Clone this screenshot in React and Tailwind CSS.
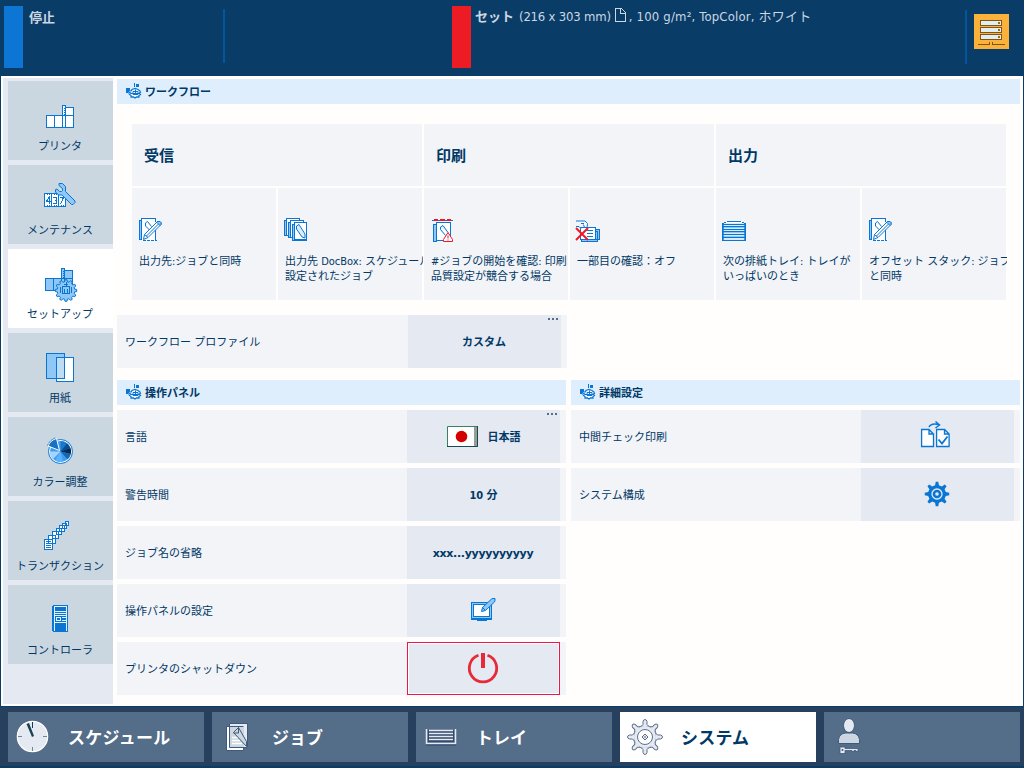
import React from "react";

const BLUE = "#0a76d3";
const LIGHT = "#8fc7f6";

function Svg({ w, h, children, className = "", crisp = false }) {
  return (
    <svg
      width={w}
      height={h}
      viewBox={`0 0 ${w} ${h}`}
      fill="none"
      shapeRendering={crisp ? "crispEdges" : "auto"}
      className={`shrink-0 overflow-visible ${className}`}
    >
      {children}
    </svg>
  );
}

function gearPath(cx, cy, outer, inner, teeth, base = 0.62, tip = 0.36) {
  const pts = [];
  for (let i = 0; i < teeth; i++) {
    const a = (i / teeth) * Math.PI * 2 - Math.PI / 2;
    const s = Math.PI / teeth;
    [[-base, inner], [-tip, outer], [tip, outer], [base, inner]].forEach(([k, r]) => {
      pts.push(`${(cx + Math.cos(a + s * k) * r).toFixed(2)} ${(cy + Math.sin(a + s * k) * r).toFixed(2)}`);
    });
  }
  return `M${pts.join("L")}Z`;
}

function PressShape({ fill }) {
  return (
    <g stroke={BLUE} fill={fill}>
      <path d="M.5 10.500h8v12h-8zM8.500 10.500h8v12h-8zM16.500 10.500h11v12h-11zM19.500 2.500h8v8h-8zM16.500 .5h3v22h-3z" />
      <path d="M18 3v1M18 5v1M18 7v1M18 9v1" />
    </g>
  );
}

const PrinterIcon = () => (
  <Svg w={37} h={30} crisp><g transform="translate(4 4)"><PressShape fill="#fff" /></g></Svg>
);

const WrenchIcon = () => (
  <Svg w={37} h={30}>
    <g stroke={BLUE} shapeRendering="crispEdges">
      <path d="M2.500 8.500h21v13h-21zM9.500 8.500v13M16.500 8.500v13" fill="#fff" />
      <path d="M5 9.500h3M12 9.500h3M5 20.500h3M12 20.500h3M19 20.500h3" strokeDasharray="1 1" />
      <path d="M7.500 19V11.500L4.500 16.500H9" />
      <path d="M11 12.500h3.500v2.500h-2h2v3.500H11" />
      <path d="M17.500 12.500h4L18.500 19" />
    </g>
    <path
      d="M17 -1.500h3.500l3 3v5l9.500 9.500v1.500l-2 2h-1.500l-9.500-9.500h-3.500l-3-3V4.500l1.500-.5 2.500 2.500h2l1-1V3.500L17 .5z"
      fill={LIGHT}
      stroke={BLUE}
    />
  </Svg>
);

const SetupIcon = () => (
  <Svg w={37} h={30}>
    <g transform="translate(3 -1)" shapeRendering="crispEdges"><PressShape fill={LIGHT} /></g>
    <path d={gearPath(24, 21.5, 10.8, 8.8, 12)} fill={LIGHT} stroke={BLUE} />
    <g stroke={BLUE} shapeRendering="crispEdges">
      <path d="M20.500 17.500h7v7h-7zM22 15.500h4M24.500 13v4M22.500 20v4M25.500 20v4M18.500 18v6M29.500 18v6" />
    </g>
  </Svg>
);

const PaperIcon = () => (
  <Svg w={37} h={30} crisp>
    <path d="M4.500 .5h18v25h-18z" fill={LIGHT} stroke={BLUE} />
    <path d="M14.500 4.500h17v24h-17z" fill="#fff" stroke={BLUE} />
    <path d="M15 5h7v20h-7z" fill="#bfdcf5" />
    <path d="M22.500 4v21.500h-8" stroke={BLUE} />
  </Svg>
);

const ColorIcon = () => (
  <Svg w={37} h={30}>
    <circle cx="18.500" cy="14.500" r="12" fill="#fff" stroke={BLUE} />
    <circle cx="18.500" cy="14.500" r="10.500" fill="#3f9df0" />
    <path d="M18.500 14.500V4A10.500 10.500 0 0 1 25 6.300z" fill="#1778cc" />
    <path d="M18.500 14.500L25 6.300A10.500 10.500 0 0 1 28.500 11z" fill="#0a4e92" />
    <path d="M18.500 14.500L28.500 11A10.500 10.500 0 0 1 28.800 17z" fill="#04284f" />
    <path d="M18.500 14.500L28.800 17A10.500 10.500 0 0 1 25.500 22.300z" fill="#1666b1" />
    <path d="M18.500 14.500L21 24.700A10.500 10.500 0 0 1 13 23.500z" fill="#5bb0ff" />
    <path d="M18.500 14.500L11 22A10.500 10.500 0 0 1 8 14.500z" fill="#a7d4ff" />
    <path d="M17.500 13.500L6 9A13 13 0 0 1 14.500 1.500z" fill="#1472c7" stroke="#fff" />
    <path d="M5.500 8.500A13 13 0 0 1 14 .8" stroke={BLUE} strokeDasharray="2 1" />
  </Svg>
);

const TransactionIcon = () => (
  <Svg w={37} h={30} crisp>
    <g stroke={BLUE} fill="#fff">
      <path d="M23.500 .5h3v4h-3zM20.500 2.500h4v5h-4zM17.500 4.500h5v6h-5zM14.500 7.500h5v6h-5zM10.500 10.500h6v7h-6zM6.500 14.500h7v8h-7zM2.500 18.500h8v10h-8z" />
      <path d="M4 20.500h5M4 22.500h5M4 24.500h5M4 26.500h5" />
    </g>
  </Svg>
);

const ControllerIcon = () => (
  <Svg w={37} h={30} crisp>
    <path d="M10 1l2-1h14v27H12l-2-1z" fill={BLUE} />
    <path d="M12.500 1v25M24.500 2v24M12.500 1.500h12M13 6.500h11M13 8.500h11M13 10.500h11M14.500 12.500h4v3h-4v-3zM20 12.500h4M20 15.500h4M13 17.500h11" stroke="#e5f1fc" />
  </Svg>
);

const SectionIcon = () => (
  <Svg w={16} h={16} className="-mt-px">
    <path d="M0 5h4v6H2v-1H0z" fill={BLUE} />
    <path d="M8 0h1v4H8zM10 1h3v3h-3z" fill={BLUE} />
    <path d="M2.500 9.500l2.500 -3 4-1.500 3 1.500 3 3.500-1 4-2 1h-6l-3-1z" fill="#fff" />
    <path d="M4.500 8.500l1.500-2 3-1 3 1 2.500 2M3 9l1.500 1-1 1.500 1.500 1v1.500h2.500l1.500 1 1.500-1h2.500v-1.500l1.500-1-1-1.500 1.500-1" stroke={BLUE} strokeWidth="1.300" />
    <path d="M7 8.500h5v3H7zM9.500 6.500v5M5 10.500h9" stroke={BLUE} />
  </Svg>
);

const PencilPage = () => (
  <Svg w={24} h={24}>
    <g shapeRendering="crispEdges">
      <path d="M.5 2.500H3V21.500H.5z" fill={LIGHT} stroke={BLUE} />
      <path d="M2.500 .5h14v22h-14z" fill="#fff" />
      <path d="M2.500 21V.5h14V4M16.500 12v10" stroke={BLUE} />
      <path d="M4 22.500h14" stroke={BLUE} strokeDasharray="3 1" />
    </g>
    <path d="M6.500 5l2-1.500 4 5M6.500 5v3l4 4" stroke={BLUE} />
    <path d="M5.500 16.500L18.500 3.500h2.500l1 1v2L9 19.500l-4.500 2z" fill="#fff" stroke={BLUE} />
    <path d="M7.500 18L20 5.500M5.500 16.500l3.500 3" stroke={BLUE} />
    <path d="M18.500 3.500h2.500l1 1v2l-1 1-3-3z" fill={LIGHT} stroke={BLUE} />
  </Svg>
);

const DocBoxIcon = () => (
  <Svg w={24} h={24} className="-ml-px">
    <g transform="translate(0 -1)">
      <g stroke={BLUE} fill={LIGHT} shapeRendering="crispEdges">
        <path d="M.5 3.500h14v15H.5z" />
        <path d="M2.500 1.500h13v17h-13z" fill="#fff" />
        <path d="M4.500 5.500h14v15h-14z" />
        <path d="M6.500 3.500h13v17h-13z" fill="#fff" />
        <path d="M8.500 7.500h14v16h-14z" />
        <path d="M10.500 5.500h12v17h-12z" fill="#fff" />
      </g>
      <path d="M12.500 9l2.500-1.500 6 9.500v4l-3-1-5.500-8z" fill="#dceffe" stroke={BLUE} />
    </g>
  </Svg>
);

const ConfirmStartIcon = () => (
  <Svg w={24} h={25} className="ml-0.5">
    <g shapeRendering="crispEdges">
      <path d="M-1 2.500h21" stroke={BLUE} />
      <path d="M1 2h4M7 2h5M14 2h4" stroke="#f01828" strokeWidth="2" />
      <path d="M.5 6.500h3v17h-3z" fill={LIGHT} stroke={BLUE} />
      <path d="M3.500 4.500h14v18h-14z" fill="#fff" stroke={BLUE} />
    </g>
    <path d="M7.500 9l2.500-1.500 5 7M7.500 9v2.500l5 6" stroke={BLUE} fill="#dceffe" />
    <path d="M15 14.500l4.500 7v2h-9v-2z" fill="#fff" stroke="#f01828" />
    <path d="M15 17.500v3M15 21.500v1" stroke="#f01828" />
  </Svg>
);

const ProofOffIcon = () => (
  <Svg w={25} h={25} className="-ml-px">
    <g shapeRendering="crispEdges">
      <path d="M5.500 13.500h16v10h-16zM19.500 11.500h4v10h-4z" fill={LIGHT} stroke={BLUE} />
      <path d="M4.500 9.500h15v12h-15z" fill="#fff" stroke={BLUE} />
      <path d="M11 12.500h6M11 15.500h6M11 18.500h6" stroke={BLUE} />
    </g>
    <path d="M0 3h9l2.500 2.500-.5 4H8.500l-1-3M0 8.500h3l2 2M5 5.500h3" stroke={BLUE} fill="#fff" />
    <path d="M0 10l12 12M12 10L0 22" stroke="#f01828" strokeWidth="2" />
  </Svg>
);

const StackIcon = () => (
  <Svg w={24} h={24} crisp className="-ml-px">
    <g transform="translate(0 -1)">
      <path d="M.5 6.500L6.500 4.500h11l6 2v17H.5z" fill="#d6ebfc" stroke={BLUE} />
      <path d="M3 6h18l-4-1.500H7z" fill="#fff" />
      <path d="M1 9h22v2H1zM1 14h22v2H1zM1 19h22v2H1z" fill={LIGHT} />
      <path d="M0 7.500h24M0 9.500h24M0 12.500h24M0 14.500h24M0 17.500h24M0 20.500h24M0 23.500h24" stroke={BLUE} />
      <path d="M1.500 7v17M22.500 7v17" stroke={BLUE} opacity=".7" />
    </g>
  </Svg>
);

const FlagIcon = () => (
  <Svg w={31} h={21}>
    <path d="M.5 .5h30v20H.5z" fill="#fff" stroke="#35845f" />
    <path d="M27 1h3v19h-3z" fill="#969b9b" />
    <path d="M30.500 0v20.500H0" stroke="#174b4b" />
    <circle cx="14.500" cy="10.500" r="5.800" fill="#d40000" />
  </Svg>
);

const PanelIcon = () => (
  <Svg w={25} h={24} className="-mt-0.5">
    <g shapeRendering="crispEdges">
      <path d="M.5 4.500h20v17H.5z" fill={LIGHT} stroke={BLUE} />
      <path d="M2.500 6.500h16v12h-16z" fill="#fff" stroke={BLUE} />
      <path d="M0 20.500h21M6 22.500h10" stroke={BLUE} />
    </g>
    <path d="M10.500 13.500l1-4L20.500 1l1.500-.5h2v2l-.5 1.500-9 8.500z" fill={LIGHT} stroke={BLUE} />
    <path d="M11.500 9.500l3 3" stroke={BLUE} />
  </Svg>
);

const PowerIcon = () => (
  <Svg w={32} h={32} className="-mt-0.5">
    <path d="M11.500 3.300a13.700 13.700 0 1 0 9 0" stroke="#e62a37" strokeWidth="2.800" />
    <path d="M14 1h4v15h-4z" fill="#e62a37" />
  </Svg>
);

const CheckPagesIcon = () => (
  <Svg w={29} h={27} className="-mt-[5px]">
    <path d="M.6 8.500h7.400l4.500 4.500v12.500H.6zM8 8.500V13h4.500" fill="#fff" stroke={BLUE} strokeWidth="1.300" />
    <path d="M15.600 8.500h8l4.500 4.500v12.500h-12.500zM23.500 8.500V13h4.500" fill="#fff" stroke={BLUE} strokeWidth="1.300" />
    <path d="M8 6Q10 1.500 18 3.500M14.500 .5l4 3.500-4 3" stroke={BLUE} strokeWidth="1.500" />
    <path d="M17.500 18.500l3.500 4 5.500-7" stroke={BLUE} strokeWidth="1.800" />
  </Svg>
);

const BlueGear = () => (
  <Svg w={26} h={26} className="-mt-0.5">
    <path d={gearPath(13, 13, 12.3, 9, 8, 0.55, 0.26)} fill={BLUE} />
    <circle cx="13" cy="13" r="5" stroke="#e5e9f2" strokeWidth="1.300" />
    <circle cx="13" cy="13" r="1.800" fill="#e5e9f2" />
  </Svg>
);

const ClockIcon = () => (
  <Svg w={32} h={32}>
    <circle cx="15.500" cy="15.500" r="15.200" fill="#e5e9f1" stroke="#fff" strokeWidth="1.200" />
    <path d="M15.500 1v6M15.500 26v4M1 15.500h4M26 15.500h4" stroke="#71859c" />
    <path d="M15.500 1v6" stroke="#153c53" />
    <path d="M9.500 3l2.500-1 5 13-2 1z" fill="#164552" />
  </Svg>
);

const JobIcon = () => (
  <Svg w={22} h={28}>
    <path d="M.5 3.500h17v24H.5z" fill="#fff" stroke="#3e5979" />
    <path d="M3.500 .5h18v24h-18z" fill="#e5e9f2" stroke="#3e5979" />
    <path d="M4 4h14v20H4z" fill="#ccd7e1" />
    <path d="M3.500 3.500h14" stroke="#3e5979" />
    <path d="M6 14.500h6M6 17.500h8M6 20.500h10" stroke="#fff" strokeWidth="1.500" />
    <path d="M7.500 9.500l5-5 8 14v5z" fill="#ccd7e1" stroke="#3e5979" />
    <path d="M12.500 4.500v5.500h-5" stroke="#3e5979" />
  </Svg>
);

const TrayIcon = () => (
  <Svg w={30} h={17}>
    <path d="M2 1h26v12H2z" fill="#31496a" />
    <path d="M.5 0v14.500h29V0M3 1.500h24M3 4.500h24M3 7.500h24M3 10.500h24" stroke="#e5e9f2" strokeWidth="1.500" />
    <path d="M0 16h30" stroke="#31496a" />
  </Svg>
);

const SPOKES = [0, 45, 90, 135, 180, 225, 270, 315];

const SystemIcon = () => (
  <Svg w={36} h={36}>
    <g transform="translate(18 18)" stroke="#5d708a" fill="#e5e9f2">
      <circle r="11.500" />
      {SPOKES.map((a) => (
        <path key={a} d="M-4 -10.500L-2 -12.500V-15.500Q-1.500 -17.500 0 -17.500T2 -15.500V-12.500L4 -10.500" transform={`rotate(${a})`} />
      ))}
      <circle r="7.500" fill="#fff" />
      <path d="M0 -3L3 0 0 3-3 0z" />
      <path d="M0 -1v2" />
    </g>
  </Svg>
);

const UserIcon = () => (
  <Svg w={22} h={36}>
    <ellipse cx="11" cy="6.500" rx="5.500" ry="7" fill="#e5e9f2" stroke="#3e5979" />
    <path d="M.5 24.500v-4q1-6 7-6.500h7q6 .5 7 6.500v4z" fill="#ccd7e1" stroke="#3e5979" />
    <path d="M2 28h5v1.500h13v3h-2v-1h-2v1h-2v-1H7v3H2z" fill="#e5e9f2" stroke="#3e5979" strokeWidth=".8" />
    <circle cx="4.500" cy="31" r="1" fill="#3e5979" />
  </Svg>
);

const ServerIcon = () => (
  <Svg w={27} h={26} crisp>
    <g fill="#e0edf2" stroke="#7d5717">
      <path d="M2.500 .5h21v5h-21zM2.500 7.500h21v5h-21zM2.500 14.500h21v5h-21z" />
      <path d="M0 24.500h11.500v-3M27 24.500H14.500v-3" fill="none" />
    </g>
    <path d="M20 2h2v2h-2zM20 9h2v2h-2zM20 16h2v2h-2z" fill="#a46b13" />
  </Svg>
);

const PageGlyph = () => (
  <Svg w={11} h={14} className="ml-1 mr-[3px] -mt-1" crisp>
    <path d="M.5 .5h6l4 4v9H.5zM5.500 .5v5h5" stroke="#cbd7e2" />
  </Svg>
);

const NAV = [
  ["プリンタ", PrinterIcon],
  ["メンテナンス", WrenchIcon],
  ["セットアップ", SetupIcon],
  ["用紙", PaperIcon],
  ["カラー調整", ColorIcon],
  ["トランザクション", TransactionIcon],
  ["コントローラ", ControllerIcon],
];

const WORKFLOW = [
  { title: "受信", cells: [[PencilPage, ["出力先:ジョブと同時"]], [DocBoxIcon, ["出力先 DocBox: スケジュール", "設定されたジョブ"]]] },
  { title: "印刷", cells: [[ConfirmStartIcon, ["#ジョブの開始を確認: 印刷", "品質設定が競合する場合"]], [ProofOffIcon, ["一部目の確認：オフ"]]] },
  { title: "出力", cells: [[StackIcon, ["次の排紙トレイ: トレイが", "いっぱいのとき"]], [PencilPage, ["オフセット スタック: ジョブ", "と同時"]]] },
];

function SectionTitle({ children }) {
  return (
    <h2 className="flex h-[25px] items-center gap-[3px] bg-[#dfeefc] pl-[9px] text-[11px] font-bold">
      <SectionIcon />
      <span className="pt-0.5">{children}</span>
    </h2>
  );
}

function Row({ label, children, more, danger, pad = "" }) {
  return (
    <div className="flex h-[53px] bg-[#f3f4f7]">
      <div className="flex flex-1 items-center pl-2 pt-0.5">{label}</div>
      <button
        className={`relative mr-1.5 flex w-[153px] items-center justify-center bg-[#e5e9f2] font-bold ${pad} ${
          danger ? "border border-[#f01545] shadow-[inset_0_0_0_1px_#ffffff]" : ""
        }`}
      >
        {children}
        {more && (
          <span className="absolute right-[3px] top-[3px] flex gap-0.5">
            <i className="size-0.5 bg-[#536d8a]" />
            <i className="size-0.5 bg-[#536d8a]" />
            <i className="size-0.5 bg-[#536d8a]" />
          </span>
        )}
      </button>
    </div>
  );
}

const TABS = [
  ["スケジュール", ClockIcon, "pl-[9px]", "ml-[19px] tracking-[0.3px]"],
  ["ジョブ", JobIcon, "pl-3.5", "ml-6"],
  ["トレイ", TrayIcon, "pl-2.5", "ml-5"],
  ["システム", SystemIcon, "pl-[7px]", "ml-[18px] tracking-[0.2px]"],
  ["", UserIcon, "pl-3.5", ""],
];

export default function App() {
  return (
    <div className="flex h-[768px] w-[1024px] flex-col overflow-hidden bg-[#0a3c68] font-['DejaVu_Sans_Condensed','Noto_Sans_CJK_JP',sans-serif] text-[11px] leading-[15px] text-[#003866]">
      <header className="flex h-[76px] pl-1 pt-1.5 text-[13px] leading-5 text-[#cbd7e2]">
        <div className="h-[62px] w-[19px] bg-[#0d76d4]" />
        <div className="w-[200px] pl-1.5 pt-0.5 font-bold">停止</div>
        <div className="mt-[3px] h-[54px] w-0.5 bg-[#04559b]" />
        <div className="ml-[227px] h-[62px] w-[19px] bg-[#ed1c24]" />
        <div className="flex h-[22px] w-[494px] items-center whitespace-pre pl-1">
          <b>セット</b>
          <span className="ml-[5px] tracking-[-0.2px]">(216 x 303 mm)</span>
          <PageGlyph />
          <span className="tracking-[0.18px]">, 100 g/m², TopColor, ホワイト</span>
        </div>
        <div className="mt-1 h-[54px] w-0.5 bg-[#04559b]" />
        <div className="ml-[7px] mt-2 flex size-[35px] justify-center bg-[#fcb13b] pt-1.5">
          <ServerIcon />
        </div>
      </header>

      <div className="mx-px flex h-[630px] bg-[#fffefd] pl-0.5 pt-0.5">
        <nav className="flex h-[626px] w-[110px] flex-col gap-[5px] bg-[#e5e9f2] pl-[5px] pt-[3px]">
          {NAV.map(([label, Icon]) => (
            <button
              key={label}
              className={`flex h-[79px] shrink-0 flex-col items-center pt-5 ${label === "セットアップ" ? "bg-white" : "bg-[#cbd7e0]"}`}
            >
              <Icon />
              <span className="mt-2 whitespace-nowrap pr-px">{label}</span>
            </button>
          ))}
        </nav>

        <main className="ml-1 mt-px w-[903px]">
          <SectionTitle>ワークフロー</SectionTitle>
          <div className="ml-[15px] mt-5 flex gap-0.5">
            {WORKFLOW.map((group) => (
              <section key={group.title} className="w-[290px]">
                <h3 className="flex h-[62px] items-center bg-[#f3f4f7] pl-3 pt-0.5 text-[15px] font-bold">{group.title}</h3>
                <div className="mt-0.5 flex gap-0.5">
                  {group.cells.map(([Icon, lines]) => (
                    <div key={lines[0]} className="h-[112px] w-36 bg-[#f3f4f7] pl-[7px] pt-[30px]">
                      <div className="h-9"><Icon /></div>
                      <p className="w-[138px] overflow-hidden whitespace-nowrap">
                        {lines.map((line) => (
                          <span key={line} className="block">{line}</span>
                        ))}
                      </p>
                    </div>
                  ))}
                </div>
              </section>
            ))}
          </div>

          <div className="mt-[15px] w-[450px]">
            <Row label="ワークフロー プロファイル" more pad="pr-px">
              <span className="pt-0.5">カスタム</span>
            </Row>
          </div>

          <div className="mt-3 flex gap-[5px]">
            <section className="flex w-[449px] flex-col gap-[5px]">
              <SectionTitle>操作パネル</SectionTitle>
              <Row label="言語" more>
                <FlagIcon />
                <span className="ml-2.5 pt-0.5">日本語</span>
              </Row>
              <Row label="警告時間">
                <span className="pt-0.5">10 分</span>
              </Row>
              <Row label="ジョブ名の省略" pad="pr-px">
                <span className="pt-0.5 font-['DejaVu_Sans'] tracking-[-0.3px]">xxx...yyyyyyyyyy</span>
              </Row>
              <Row label="操作パネルの設定"><PanelIcon /></Row>
              <Row label="プリンタのシャットダウン" danger pad="pr-px"><PowerIcon /></Row>
            </section>
            <section className="flex w-[449px] flex-col gap-[5px]">
              <SectionTitle>詳細設定</SectionTitle>
              <Row label="中間チェック印刷" pad="pr-1"><CheckPagesIcon /></Row>
              <Row label="システム構成" pad="pr-px"><BlueGear /></Row>
            </section>
          </div>
        </main>
      </div>

      <footer className="mt-px flex h-[59px] gap-2 bg-[#27405e] pl-2 pt-[5px]">
        {TABS.map(([label, Icon, pad, gap]) => (
          <button
            key={label}
            className={`flex h-[50px] w-[196px] items-center text-[17px] font-bold ${pad} ${
              label === "システム" ? "bg-white text-[#003866]" : "bg-[#546d88] text-white"
            }`}
          >
            <Icon />
            <span className={`pt-0.5 ${gap}`}>{label}</span>
          </button>
        ))}
      </footer>
    </div>
  );
}
